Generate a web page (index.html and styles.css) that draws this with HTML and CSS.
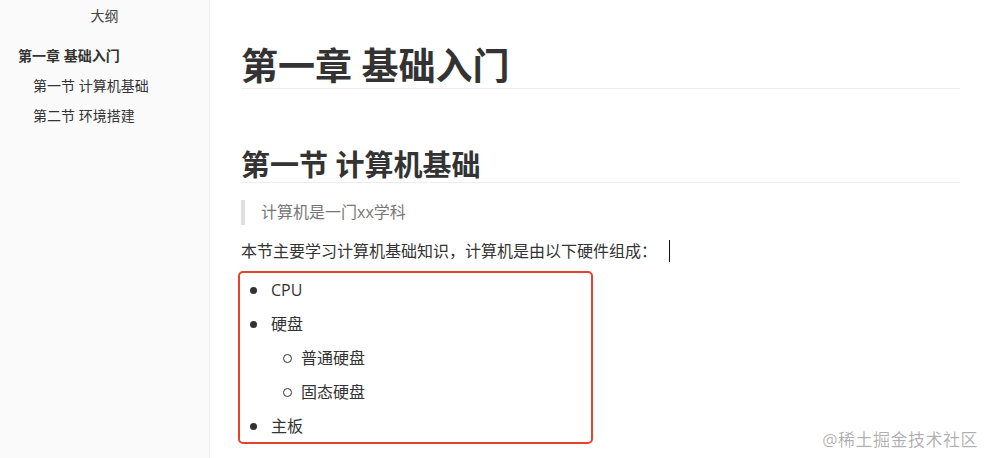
FILE: index.html
```html
<!DOCTYPE html>
<html lang="zh-CN">
<head>
<meta charset="utf-8">
<title>大纲</title>
<link rel="stylesheet" href="styles.css">
</head>
<body>
<div class="app">
  <aside class="sidebar">
    <div class="outline-title">大纲</div>
    <ul class="outline">
      <li class="outline-h1">第一章 基础入门</li>
      <li class="outline-h2">第一节 计算机基础</li>
      <li class="outline-h2">第二节 环境搭建</li>
    </ul>
  </aside>
  <main class="content">
    <h1 class="h1">第一章 基础入门</h1>
    <h2 class="h2">第一节 计算机基础</h2>
    <blockquote class="quote">计算机是一门xx学科</blockquote>
    <p class="para">本节主要学习计算机基础知识，计算机是由以下硬件组成：<span class="cursor"></span></p>
    <ul class="list">
      <li><p class="row disc">CPU</p></li>
      <li><p class="row disc">硬盘</p>
        <ul class="sublist">
          <li><p class="row circle">普通硬盘</p></li>
          <li><p class="row circle">固态硬盘</p></li>
        </ul>
      </li>
      <li><p class="row disc">主板</p></li>
    </ul>
  </main>
</div>
<div class="watermark">@稀土掘金技术社区</div>
</body>
</html>
```
FILE: styles.css
```css
* { box-sizing: border-box; }
html, body {
  margin: 0;
  padding: 0;
  height: 100%;
  overflow: hidden;
  background: #fff;
  font-family: "Open Sans", "Noto Sans CJK SC", sans-serif;
  color: #333;
}
.app {
  display: flex;
  height: 458px;
}
.sidebar {
  width: 210px;
  flex: 0 0 210px;
  background: #fafafa;
  border-right: 1px solid #f0f0f0;
  padding-top: 6px;
}
.outline-title {
  text-align: center;
  font-size: 14px;
  line-height: 20px;
  color: #444;
}
.outline {
  list-style: none;
  margin: 15px 0 0 0;
  padding: 0;
}
.outline li {
  font-size: 14px;
  line-height: 30px;
  color: #333;
  white-space: nowrap;
}
.outline-h1 {
  font-weight: 700;
  padding-left: 18px;
}
.outline-h2 {
  padding-left: 33px;
  color: #444;
}
.content {
  flex: 1;
  padding: 44px 27px 0 31px;
}
.h1 {
  margin: 0;
  font-size: 37px;
  line-height: 44px;
  font-weight: 700;
  color: #333;
  border-bottom: 1px solid #eee;
}
.h2 {
  margin: 59px 0 0 0;
  font-size: 29px;
  line-height: 34px;
  font-weight: 700;
  color: #333;
  border-bottom: 1px solid #eee;
}
.quote {
  margin: 17px 0 0 0;
  padding: 0 0 0 16px;
  border-left: 4px solid #dfdfdf;
  font-size: 16px;
  line-height: 25px;
  color: #777;
}
.para {
  margin: 14px 0 0 0;
  font-size: 16px;
  line-height: 24px;
  color: #333;
  display: flex;
  align-items: center;
}
.cursor {
  display: inline-block;
  width: 1px;
  height: 22px;
  background: #111;
  margin-left: 12px;
}
.list {
  list-style: none;
  margin: 8px 0 0 -3px;
  padding: 4px 0 3px 0;
  width: 355px;
  border: 2px solid #e8412c;
  border-radius: 5px;
  display: flex;
  flex-direction: column;
  gap: 8px;
}
.sublist {
  list-style: none;
  margin: 8px 0 0 0;
  padding: 0;
  display: flex;
  flex-direction: column;
  gap: 8px;
}
.row {
  margin: 0;
  display: flex;
  align-items: center;
  font-size: 16px;
  line-height: 26px;
  color: #333;
}
.row::before {
  content: "";
  display: block;
  width: 7px;
  height: 7px;
  border-radius: 50%;
}
.disc::before {
  background: #333;
  margin: 0 14px 0 10px;
}
.circle::before {
  border: 1px solid #333;
  margin: 0 9px 0 43px;
}
.watermark {
  position: absolute;
  right: 9px;
  bottom: 6px;
  font-size: 17px;
  line-height: 24px;
  color: rgba(0, 0, 0, 0.32);
  letter-spacing: 0.5px;
}
```
